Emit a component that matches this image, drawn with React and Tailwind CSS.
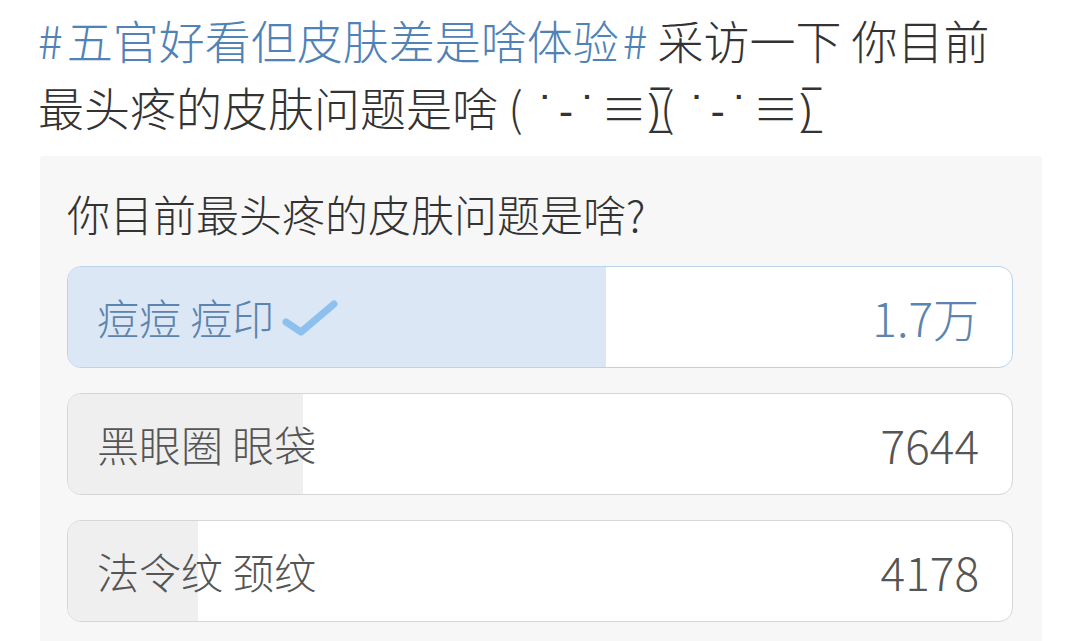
const options = [
  { label: '痘痘 痘印', pct: 57, display: '1.7万', chosen: true },
  { label: '黑眼圈 眼袋', pct: 24.9, display: '7644' },
  { label: '法令纹 颈纹', pct: 13.8, display: '4178' },
];

function Check() {
  return (
    <svg width="56" height="38" viewBox="0 0 56 38" className="ml-[8px] mt-[4px]">
      <polyline
        points="4,22 19,32 52,4"
        fill="none"
        stroke="#8cc0ee"
        strokeWidth="7"
        strokeLinecap="round"
        strokeLinejoin="round"
      />
    </svg>
  );
}

function Option({ opt }) {
  return (
    <div
      className={`relative h-[102px] rounded-[14px] border overflow-hidden bg-white ${
        opt.chosen ? 'border-[#b9d3ea]' : 'border-[#d6d6d6]'
      }`}
    >
      {/* vote bar */}
      <div
        className={`absolute inset-y-0 left-0 ${opt.chosen ? 'bg-[#dbe7f4]' : 'bg-[#efefef]'}`}
        style={{ width: `${opt.pct}%` }}
      />
      <div
        className={`relative h-full flex items-center justify-between pl-[29px] pr-[33px] ${
          opt.chosen ? 'text-[#5b84ae]' : 'text-[#555555]'
        }`}
      >
        <div className="flex items-center">
          <span className="text-[42px] leading-none">{opt.label}</span>
          {opt.chosen && <Check />}
        </div>
        <span className="text-[46px] leading-none">{opt.display}</span>
      </div>
    </div>
  );
}

const dejavu = { fontFamily: '"DejaVu Sans", sans-serif' };

function Face() {
  return (
    <>
      (<span style={dejavu} className="text-[40px] font-normal ml-[12px] tracking-[4px]">˙-˙</span>
      <span>≡)̲̅</span>
    </>
  );
}

export default function App() {
  return (
    <div
      className="w-[1080px] h-[641px] overflow-hidden bg-white font-light"
      style={{ fontFamily: '"Noto Sans CJK SC", "Noto Sans", sans-serif' }}
    >
      {/* Post text */}
      <div className="pl-[38px] pt-[6px] text-[46px] text-[#333333] whitespace-nowrap">
        <div className="h-[67px] leading-[67px]">
          <span className="text-[#4f82b6]">
            <span className="mr-[4px]">#</span>五官好看但皮肤差是啥体验<span className="ml-[4px]">#</span>
          </span>{' '}
          采访一下 你目前
        </div>
        <div className="h-[67px] leading-[67px] overflow-hidden">
          最头疼的皮肤问题是啥 <Face />
          <Face />
        </div>
      </div>

      {/* Poll card */}
      <div className="ml-[40px] mt-[16px] w-[1002px] h-[500px] bg-[#f7f7f7] rounded-[3px] pt-[29px] px-[27px]">
        <div className="text-[43px] leading-[56px] text-[#333333]">你目前最头疼的皮肤问题是啥?</div>
        <div className="mt-[25px] flex flex-col gap-[25px] pr-[2px]">
          {options.map((opt) => (
            <Option key={opt.label} opt={opt} />
          ))}
        </div>
      </div>
    </div>
  );
}
